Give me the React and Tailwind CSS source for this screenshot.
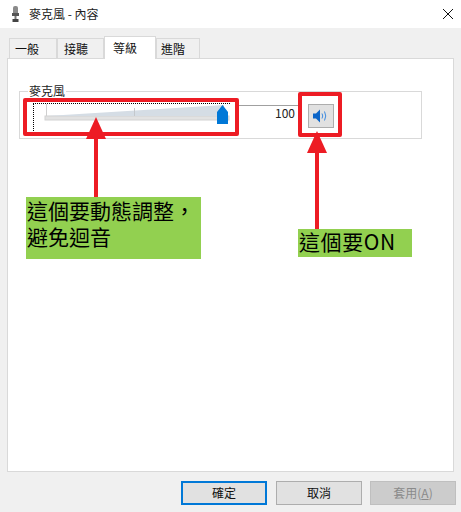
const font = { fontFamily: '"Noto Sans CJK TC","Noto Sans",sans-serif' };

function Tab({ label, active, width, pad }) {
  return (
    <div
      className={
        active
          ? "relative z-10 h-[23px] -mb-px bg-white border border-b-0 border-[#d9d9d9] flex items-center text-[12px] text-[#111]"
          : "h-[20px] bg-[#f0f0f0] border border-b-0 border-l-[#d9d9d9] border-t-[#d9d9d9] border-r-[#d9d9d9] flex items-center text-[12px] text-[#111]"
      }
      style={{ width, paddingLeft: pad }}
    >
      {label}
    </div>
  );
}

function Btn({ label, kind }) {
  const cls =
    kind === "primary"
      ? "border-2 border-[#0078d7] bg-[#e1e1e1] text-[#111]"
      : kind === "disabled"
      ? "border border-[#bfbfbf] bg-[#cccccc] text-[#8a8a8a]"
      : "border border-[#adadad] bg-[#e1e1e1] text-[#111]";
  return (
    <div className={`w-[86px] h-[24px] flex items-center justify-center text-[12px] ${cls}`}>{label}</div>
  );
}

function Arrow({ x, top, bottom }) {
  return (
    <svg className="absolute" style={{ left: x - 12, top }} width="24" height={bottom - top} viewBox={`0 0 24 ${bottom - top}`}>
      <polygon points="12,0 22,22 2,22" fill="#ed1c24" />
      <rect x="10" y="20" width="4" height={bottom - top - 20} fill="#ed1c24" />
    </svg>
  );
}

export default function App() {
  return (
    <div lang="zh-TW" className="relative w-[461px] h-[512px] bg-[#f0f0f0] overflow-hidden flex flex-col" style={font}>
      <div className="h-[28px] bg-white flex items-center relative shrink-0">
        <svg className="ml-[12px]" width="7" height="16" viewBox="0 0 7 16">
          <rect x="1" y="0" width="5" height="9" rx="2" fill="#8a8a8a" />
          <rect x="0" y="7" width="7" height="3" fill="#555" />
          <rect x="2.5" y="10" width="2" height="3" fill="#777" />
          <rect x="0.5" y="13" width="6" height="3" fill="#444" />
        </svg>
        <span className="ml-[10px] text-[12px] text-[#222]">麥克風 - 內容</span>
        <svg className="ml-auto mr-[8px]" width="10" height="10" viewBox="0 0 10 10">
          <path d="M0 0 L10 10 M10 0 L0 10" stroke="#111" strokeWidth="1" />
        </svg>
      </div>

      <div className="pl-[9px] pt-[8px] flex items-end h-[30px] shrink-0">
        <Tab label="一般" width={48} pad={5} />
        <Tab label="接聽" width={47} pad={6} />
        <Tab label="等級" active width={52} pad={8} />
        <Tab label="進階" width={44} pad={4} />
      </div>

      <div className="mx-[7px] w-[447px] h-[414px] bg-white border border-[#d9d9d9] pt-[32px] pl-[11px] shrink-0">
        <div className="relative w-[403px] h-[48px] border border-[#d9d9d9] flex">
          <span className="absolute left-[8px] -top-[8px] bg-white px-px text-[12px] leading-[14px] text-[#222]">麥克風</span>
          <div className="w-[212px] ml-[13px] mt-[11px] h-[28px]">
            <div className="relative w-[197px] h-[28px] border-l border-t border-dotted border-black">
              <svg className="absolute left-0 top-0" width="197" height="28" viewBox="0 0 197 28">
                <rect x="11" y="12" width="184" height="4" fill="#e2e2e2" stroke="#d2d2d2" />
                <polygon points="13,12 190,1 190,12" fill="#d5dde5" />
                <rect x="12" y="0" width="1" height="12" fill="#cfcfcf" />
                <rect x="100" y="4" width="1" height="8" fill="#c4c8cc" />
                <polygon points="183,8 188.5,1 194,8 194,20 183,20" fill="#0078d7" />
              </svg>
            </div>
          </div>
          <div className="relative flex-1">
            <div className="absolute -left-[8px] top-[13px] w-[65px] h-px bg-[#a0a0a0]" />
            <span className="absolute right-[2px] top-[13px] text-[12px] leading-[16px] text-[#222]">100</span>
          </div>
          <div className="w-[26px] h-[24px] mt-[12px] ml-[11px] mr-[87px] bg-[#e1e1e1] border border-[#adadad] flex items-center justify-center">
            <svg width="16" height="14" viewBox="0 0 16 14">
              <path d="M0 4.5 H3 L7 0.5 V13.5 L3 9.5 H0 Z" fill="#0a64c8" />
              <path d="M9 4.5 Q10.5 7 9 9.5" stroke="#3c8ae0" strokeWidth="1" fill="none" />
              <path d="M11.5 2.5 Q14 7 11.5 11.5" stroke="#3c8ae0" strokeWidth="1" fill="none" />
            </svg>
          </div>
        </div>
      </div>

      <div className="flex justify-end gap-[8px] pt-[9px] pr-[5px]">
        <div className="mr-px"><Btn label="確定" kind="primary" /></div>
        <Btn label="取消" />
        <Btn label={<span>套用(<span className="underline">A</span>)</span>} kind="disabled" />
      </div>

      {/* annotations */}
      <div className="absolute left-[23px] top-[98px] w-[216px] h-[38px] border-4 border-[#ed1c24] rounded-[2px]" />
      <div className="absolute left-[298px] top-[92px] w-[44px] h-[45px] border-4 border-[#ed1c24] rounded-[2px]" />
      <Arrow x={96} top={117} bottom={198} />
      <Arrow x={317} top={131} bottom={229} />
      <div className="absolute left-[26px] top-[197px] w-[175px] h-[62px] bg-[#92d050] text-[21px] leading-[26px] text-black pl-[1px]">
        這個要動態調整，<br />避免迴音
      </div>
      <div className="absolute left-[298px] top-[229px] w-[114px] h-[28px] bg-[#92d050] text-[21px] leading-[24px] text-black pl-[1px] tracking-[0.6px]">
        這個要ON
      </div>
    </div>
  );
}
